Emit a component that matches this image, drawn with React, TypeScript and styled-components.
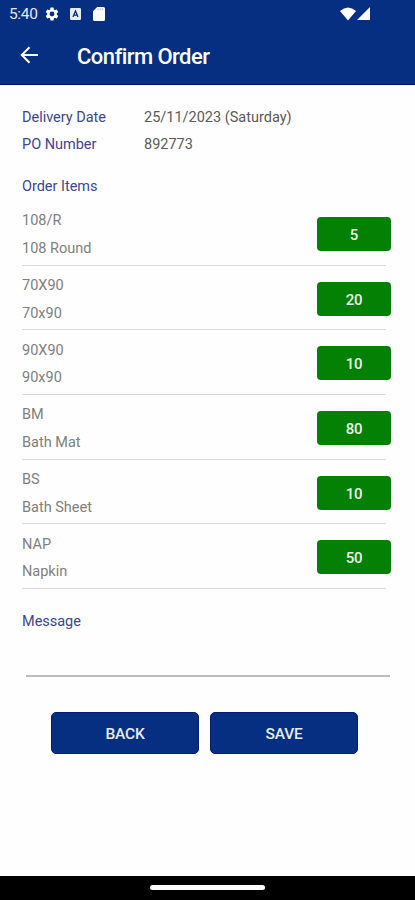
import React from "react";
import styled, { createGlobalStyle } from "styled-components";

const navy = "#062f82";

const GlobalStyle = createGlobalStyle`
  * { box-sizing: border-box; }
  body { margin: 0; background: #fff; font-family: Roboto, sans-serif; }
`;

const Screen = styled.div`
  display: flex;
  flex-direction: column;
  width: 415px;
  height: 900px;
  overflow: hidden;
  background: #fefefe;
`;

const TopBar = styled.header`
  flex: none;
  height: 85px;
  background: ${navy};
  border-bottom: 1.5px solid #04106b;
  color: #fff;
`;

const StatusBar = styled.div`
  display: flex;
  align-items: center;
  height: 27px;
  padding: 0 44px 0 9px;
`;

const Clock = styled.span`
  width: 35px;
  padding-top: 1px;
  font-size: 15.5px;
  letter-spacing: -0.35px;
  line-height: 27px;
  color: #e4e9f5;
`;

const StatusIcons = styled.div<{ $gap: number }>`
  display: flex;
  align-items: center;
  gap: ${(p) => p.$gap}px;
  svg { display: block; }
`;

const Spacer = styled.div`
  flex: 1;
`;

const TitleBar = styled.div`
  display: flex;
  align-items: center;
  height: 57px;
  padding-left: 20px;
  gap: 38px;
`;

const IconButton = styled.button`
  display: flex;
  padding: 0;
  margin-top: -2px;
  border: 0;
  background: none;
  color: inherit;
`;

const Title = styled.h1`
  margin: 2px 0 0;
  font-size: 22px;
  font-weight: 500;
  letter-spacing: -0.55px;
  line-height: 30px;
`;

const Content = styled.main`
  flex: 1;
  padding: 20px 25px 0 22px;
`;

const Details = styled.dl`
  display: grid;
  grid-template-columns: 122px 1fr;
  grid-auto-rows: 26.5px;
  margin: 0;
`;

const Label = styled.dt`
  font-size: 14.5px;
  font-weight: 400;
  letter-spacing: -0.02px;
  line-height: 26.5px;
  color: #3d4590;
`;

const Value = styled.dd`
  margin: 0;
  font-size: 14.5px;
  letter-spacing: 0;
  line-height: 26.5px;
  color: #5a5a5a;
`;

const SectionLabel = styled(Label).attrs({ as: "h2" })<{ $top: number }>`
  margin: ${(p) => p.$top}px 0 0;
`;

const Items = styled.ul`
  list-style: none;
  margin: 1px 4px 0 0;
  padding: 0;
`;

const Item = styled.li`
  display: flex;
  justify-content: space-between;
  height: 64.65px;
  padding-top: 5.4px;
  border-bottom: 1.5px solid #dadada;
`;

const ItemText = styled.div`
  padding-top: 1px;
  font-size: 14.5px;
  letter-spacing: 0;
  line-height: 27.6px;
  color: #808080;
`;

const Quantity = styled.button`
  width: 74px;
  height: 34px;
  margin: 10.7px -5px 0 0;
  padding: 2px 0 0;
  border: 0;
  border-radius: 4px;
  background: #048004;
  color: #e9f5e9;
  font: 500 15px/32px Roboto, sans-serif;
  letter-spacing: -0.2px;
`;

const MessageInput = styled.input`
  display: block;
  width: 364px;
  height: 42px;
  margin-left: 4px;
  padding: 0;
  border: 0;
  border-bottom: 2px solid #bdbdbd;
  background: none;
  outline: none;
  font: 14.5px Roboto, sans-serif;
`;

const Actions = styled.div`
  display: flex;
  gap: 11px;
  margin: 35px 0 0 29px;
`;

const ActionButton = styled.button`
  width: 148px;
  height: 42px;
  padding: 2px 0 0;
  border: 1px solid #041c72;
  border-radius: 5px;
  background: ${navy};
  color: #e9edf8;
  font: 500 15.5px/38px Roboto, sans-serif;
  letter-spacing: -0.2px;
`;

const NavigationBar = styled.footer`
  display: flex;
  flex: none;
  justify-content: center;
  height: 24.5px;
  padding-top: 9.5px;
  background: #000;
`;

const HomeHandle = styled.div`
  width: 115px;
  height: 5px;
  border-radius: 3px;
  background: #fff;
`;

const items = [
  { code: "108/R", name: "108 Round", quantity: 5 },
  { code: "70X90", name: "70x90", quantity: 20 },
  { code: "90X90", name: "90x90", quantity: 10 },
  { code: "BM", name: "Bath Mat", quantity: 80 },
  { code: "BS", name: "Bath Sheet", quantity: 10 },
  { code: "NAP", name: "Napkin", quantity: 50 },
];

const GearIcon = () => (
  <svg width="16" height="16" viewBox="0 0 24 24" fill="#fff">
    <path d="M19.14 12.94c.04-.3.06-.61.06-.94 0-.32-.02-.64-.07-.94l2.03-1.58a.49.49 0 0 0 .12-.61l-1.92-3.32a.49.49 0 0 0-.59-.22l-2.39.96c-.5-.38-1.03-.7-1.62-.94l-.36-2.54a.48.48 0 0 0-.48-.41h-3.84a.47.47 0 0 0-.47.41l-.36 2.54c-.59.24-1.13.57-1.62.94l-2.39-.96a.48.48 0 0 0-.59.22L2.74 8.87a.47.47 0 0 0 .12.61l2.03 1.58c-.05.3-.09.63-.09.94s.02.64.07.94l-2.03 1.58a.49.49 0 0 0-.12.61l1.92 3.32c.12.22.37.29.59.22l2.39-.96c.5.38 1.03.7 1.62.94l.36 2.54c.05.24.24.41.48.41h3.84c.24 0 .44-.17.47-.41l.36-2.54c.59-.24 1.13-.56 1.62-.94l2.39.96c.22.08.47 0 .59-.22l1.92-3.32a.47.47 0 0 0-.12-.61zM12 15.6a3.6 3.6 0 1 1 0-7.2 3.6 3.6 0 0 1 0 7.2z" />
  </svg>
);

const KeyboardIcon = () => (
  <svg width="11" height="12" viewBox="0 0 11 12">
    <rect width="11" height="12" rx="1.2" fill="#e8ecf7" />
    <path d="M3 9 5.5 3 8 9M3.9 7.2h3.2" fill="none" stroke={navy} strokeWidth="1.3" />
  </svg>
);

const SdCardIcon = () => (
  <svg width="14" height="14" viewBox="-2 0 14 14">
    <path d="M4.2 0h6.3A1.5 1.5 0 0 1 12 1.5v11a1.5 1.5 0 0 1-1.5 1.5h-9A1.5 1.5 0 0 1 0 12.5V4.2z" fill="#fff" />
    <path d="M5 1.3v2M7.2 1.3v2M9.4 1.3v2" stroke="#9aa9cf" strokeWidth="0.8" />
  </svg>
);

const WifiIcon = () => (
  <svg width="18" height="14" viewBox="0 0 18 14">
    <path d="M1 4Q9-3 17 4L9 13.5z" fill="#fff" />
  </svg>
);

const SignalIcon = () => (
  <svg width="14" height="13" viewBox="0 0 14 13">
    <path d="M13 0v13H0z" fill="#fff" />
  </svg>
);

const BackIcon = () => (
  <svg width="19" height="18" viewBox="0 0 19 18" fill="none" stroke="#fff" strokeWidth="2">
    <path d="M18 9H2.5M9.5 1.3 1.8 9l7.7 7.7" />
  </svg>
);

export default function App() {
  return (
    <>
      <GlobalStyle />
      <Screen>
        <TopBar>
          <StatusBar>
            <Clock>5:40</Clock>
            <StatusIcons $gap={10}>
              <GearIcon />
              <KeyboardIcon />
              <SdCardIcon />
            </StatusIcons>
            <Spacer />
            <StatusIcons $gap={0}>
              <WifiIcon />
              <SignalIcon />
            </StatusIcons>
          </StatusBar>
          <TitleBar>
            <IconButton aria-label="Back">
              <BackIcon />
            </IconButton>
            <Title>Confirm Order</Title>
          </TitleBar>
        </TopBar>
        <Content>
          <Details>
            <Label>Delivery Date</Label>
            <Value>25/11/2023 (Saturday)</Value>
            <Label>PO Number</Label>
            <Value>892773</Value>
          </Details>
          <SectionLabel $top={15.5}>Order Items</SectionLabel>
          <Items>
            {items.map((item) => (
              <Item key={item.code}>
                <ItemText>
                  <div>{item.code}</div>
                  <div>{item.name}</div>
                </ItemText>
                <Quantity>{item.quantity}</Quantity>
              </Item>
            ))}
          </Items>
          <SectionLabel $top={20}>Message</SectionLabel>
          <MessageInput aria-label="Message" />
          <Actions>
            <ActionButton>BACK</ActionButton>
            <ActionButton>SAVE</ActionButton>
          </Actions>
        </Content>
        <NavigationBar>
          <HomeHandle />
        </NavigationBar>
      </Screen>
    </>
  );
}
